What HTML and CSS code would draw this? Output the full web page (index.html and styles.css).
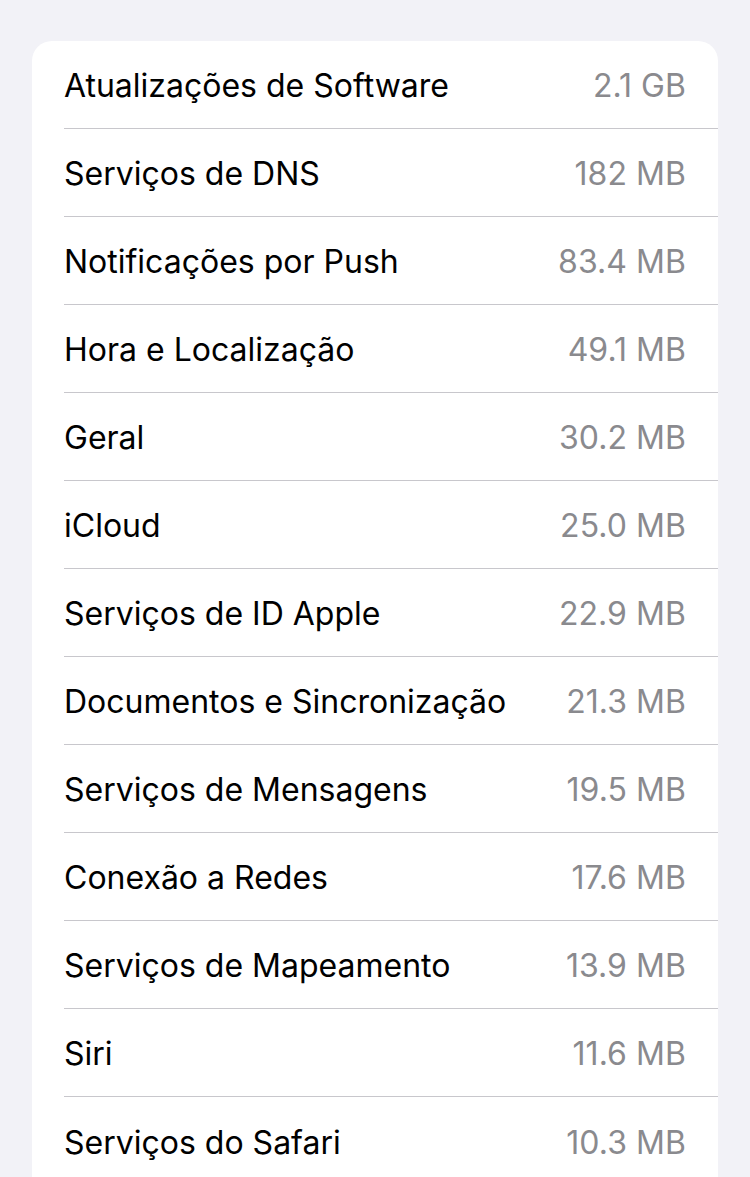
FILE: index.html
```html
<!DOCTYPE html>
<html lang="pt">
<head>
<meta charset="utf-8">
<link rel="stylesheet" href="styles.css">
</head>
<body>
<div class="page">
  <div class="card">
    <div class="row"><span class="label">Atualizações de Software</span><span class="value">2.1 GB</span></div>
    <div class="row"><span class="label">Serviços de DNS</span><span class="value">182 MB</span></div>
    <div class="row"><span class="label">Notificações por Push</span><span class="value">83.4 MB</span></div>
    <div class="row"><span class="label">Hora e Localização</span><span class="value">49.1 MB</span></div>
    <div class="row"><span class="label">Geral</span><span class="value">30.2 MB</span></div>
    <div class="row"><span class="label">iCloud</span><span class="value">25.0 MB</span></div>
    <div class="row"><span class="label">Serviços de ID Apple</span><span class="value">22.9 MB</span></div>
    <div class="row"><span class="label">Documentos e Sincronização</span><span class="value">21.3 MB</span></div>
    <div class="row"><span class="label">Serviços de Mensagens</span><span class="value">19.5 MB</span></div>
    <div class="row"><span class="label">Conexão a Redes</span><span class="value">17.6 MB</span></div>
    <div class="row"><span class="label">Serviços de Mapeamento</span><span class="value">13.9 MB</span></div>
    <div class="row"><span class="label">Siri</span><span class="value">11.6 MB</span></div>
    <div class="row"><span class="label">Serviços do Safari</span><span class="value">10.3 MB</span></div>
  </div>
</div>
</body>
</html>
```
FILE: styles.css
```css
html, body {
  margin: 0;
  padding: 0;
  background: #f2f2f7;
}
body {
  font-family: Inter, "Noto Sans", sans-serif;
  -webkit-font-smoothing: antialiased;
}
.page {
  padding: 41px 32px 0 32px;
  height: 1177px;
  box-sizing: border-box;
  overflow: hidden;
}
.card {
  background: #ffffff;
  border-radius: 20px;
  padding-left: 32px;
  padding-bottom: 60px;
}
.row {
  height: 88px;
  display: flex;
  align-items: center;
  justify-content: space-between;
  padding-top: 2px;
  padding-right: 32px;
  border-bottom: 1px solid #c8c7cc;
  box-sizing: border-box;
}
.row:last-child {
  border-bottom: none;
}
.label {
  font-size: 32px;
  color: #000000;
}
.value {
  font-size: 32px;
  color: #8a8a8e;
  letter-spacing: 0.05px;
}
```
